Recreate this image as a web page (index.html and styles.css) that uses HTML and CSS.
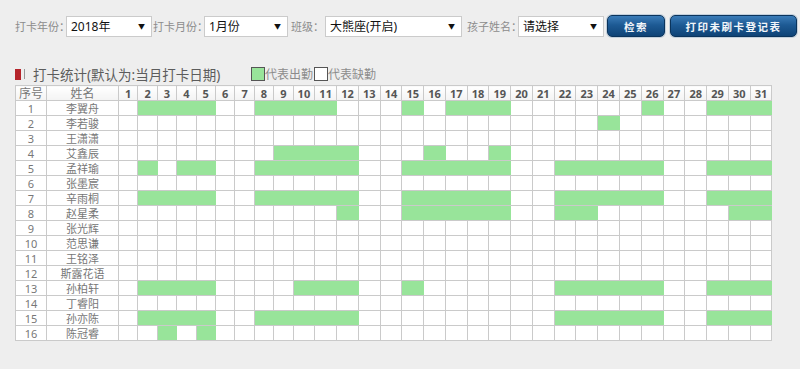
FILE: index.html
```html
<!DOCTYPE html>
<html lang="zh-CN">
<head>
    <meta charset="UTF-8">
    <title>打卡统计</title>
    <link rel="stylesheet" href="styles.css">
</head>
<body>
    <div class="toolbar">
        <span class="label l-year">打卡年份：</span>
        <div class="select s-year"><span>2018年</span><i>▼</i></div>
        <span class="label l-month">打卡月份：</span>
        <div class="select s-month"><span>1月份</span><i>▼</i></div>
        <span class="label l-class">班级：</span>
        <div class="select s-class"><span>大熊座(开启)</span><i>▼</i></div>
        <span class="label l-kid">孩子姓名：</span>
        <div class="select s-kid"><span>请选择</span><i>▼</i></div>
        <button class="btn btn-search">检索</button>
        <button class="btn btn-print">打印未刷卡登记表</button>
    </div>

    <div class="title-row">
        <span class="mark-red"></span><span class="mark-gray"></span>
        <h2>打卡统计(默认为:当月打卡日期)</h2>
        <div class="legend">
            <span class="box box-on"></span><span class="legend-text">代表出勤</span>
            <span class="box box-off"></span><span class="legend-text">代表缺勤</span>
        </div>
    </div>

    <table class="grid">
        <colgroup>
            <col class="c-no"><col class="c-name">
            <col class="c-d"><col class="c-d"><col class="c-d"><col class="c-d"><col class="c-d"><col class="c-d"><col class="c-d"><col class="c-d"><col class="c-d">
            <col class="c-dd"><col class="c-dd"><col class="c-dd"><col class="c-dd"><col class="c-dd"><col class="c-dd"><col class="c-dd"><col class="c-dd"><col class="c-dd"><col class="c-dd"><col class="c-dd">
            <col class="c-dd"><col class="c-dd"><col class="c-dd"><col class="c-dd"><col class="c-dd"><col class="c-dd"><col class="c-dd"><col class="c-dd"><col class="c-dd"><col class="c-dd"><col class="c-dd">
        </colgroup>
        <thead>
            <tr>
                <th class="th-text">序号</th><th class="th-text">姓名</th>
                <th>1</th><th>2</th><th>3</th><th>4</th><th>5</th><th>6</th><th>7</th><th>8</th><th>9</th><th>10</th><th>11</th><th>12</th><th>13</th><th>14</th><th>15</th><th>16</th><th>17</th><th>18</th><th>19</th><th>20</th><th>21</th><th>22</th><th>23</th><th>24</th><th>25</th><th>26</th><th>27</th><th>28</th><th>29</th><th>30</th><th>31</th>
            </tr>
        </thead>
        <tbody>
            <tr><td>1</td><td>李翼舟</td><td></td><td class="g"></td><td class="g"></td><td class="g"></td><td class="g"></td><td></td><td></td><td class="g"></td><td class="g"></td><td class="g"></td><td class="g"></td><td></td><td></td><td></td><td class="g"></td><td></td><td class="g"></td><td class="g"></td><td class="g"></td><td></td><td></td><td></td><td></td><td></td><td></td><td class="g"></td><td></td><td></td><td class="g"></td><td class="g"></td><td class="g"></td></tr>
            <tr><td>2</td><td>李若骏</td><td></td><td></td><td></td><td></td><td></td><td></td><td></td><td></td><td></td><td></td><td></td><td></td><td></td><td></td><td></td><td></td><td></td><td></td><td></td><td></td><td></td><td></td><td></td><td class="g"></td><td></td><td></td><td></td><td></td><td></td><td></td><td></td></tr>
            <tr><td>3</td><td>王潇潇</td><td></td><td></td><td></td><td></td><td></td><td></td><td></td><td></td><td></td><td></td><td></td><td></td><td></td><td></td><td></td><td></td><td></td><td></td><td></td><td></td><td></td><td></td><td></td><td></td><td></td><td></td><td></td><td></td><td></td><td></td><td></td></tr>
            <tr><td>4</td><td>艾鑫辰</td><td></td><td></td><td></td><td></td><td></td><td></td><td></td><td></td><td class="g"></td><td class="g"></td><td class="g"></td><td class="g"></td><td></td><td></td><td></td><td class="g"></td><td></td><td></td><td class="g"></td><td></td><td></td><td></td><td></td><td></td><td></td><td></td><td></td><td></td><td></td><td></td><td></td></tr>
            <tr><td>5</td><td>孟祥瑜</td><td></td><td class="g"></td><td></td><td class="g"></td><td class="g"></td><td></td><td></td><td class="g"></td><td class="g"></td><td class="g"></td><td class="g"></td><td class="g"></td><td></td><td></td><td class="g"></td><td class="g"></td><td class="g"></td><td class="g"></td><td class="g"></td><td></td><td></td><td class="g"></td><td class="g"></td><td class="g"></td><td class="g"></td><td class="g"></td><td></td><td></td><td class="g"></td><td class="g"></td><td class="g"></td></tr>
            <tr><td>6</td><td>张墨宸</td><td></td><td></td><td></td><td></td><td></td><td></td><td></td><td></td><td></td><td></td><td></td><td></td><td></td><td></td><td></td><td></td><td></td><td></td><td></td><td></td><td></td><td></td><td></td><td></td><td></td><td></td><td></td><td></td><td></td><td></td><td></td></tr>
            <tr><td>7</td><td>辛雨桐</td><td></td><td class="g"></td><td class="g"></td><td class="g"></td><td class="g"></td><td></td><td></td><td class="g"></td><td class="g"></td><td class="g"></td><td class="g"></td><td class="g"></td><td></td><td></td><td class="g"></td><td class="g"></td><td class="g"></td><td class="g"></td><td class="g"></td><td></td><td></td><td class="g"></td><td class="g"></td><td class="g"></td><td class="g"></td><td class="g"></td><td></td><td></td><td class="g"></td><td class="g"></td><td class="g"></td></tr>
            <tr><td>8</td><td>赵星柔</td><td></td><td></td><td></td><td></td><td></td><td></td><td></td><td></td><td></td><td></td><td></td><td class="g"></td><td></td><td></td><td class="g"></td><td class="g"></td><td class="g"></td><td class="g"></td><td class="g"></td><td></td><td></td><td class="g"></td><td class="g"></td><td></td><td></td><td></td><td></td><td></td><td></td><td class="g"></td><td class="g"></td></tr>
            <tr><td>9</td><td>张光辉</td><td></td><td></td><td></td><td></td><td></td><td></td><td></td><td></td><td></td><td></td><td></td><td></td><td></td><td></td><td></td><td></td><td></td><td></td><td></td><td></td><td></td><td></td><td></td><td></td><td></td><td></td><td></td><td></td><td></td><td></td><td></td></tr>
            <tr><td>10</td><td>范思谦</td><td></td><td></td><td></td><td></td><td></td><td></td><td></td><td></td><td></td><td></td><td></td><td></td><td></td><td></td><td></td><td></td><td></td><td></td><td></td><td></td><td></td><td></td><td></td><td></td><td></td><td></td><td></td><td></td><td></td><td></td><td></td></tr>
            <tr><td>11</td><td>王铭泽</td><td></td><td></td><td></td><td></td><td></td><td></td><td></td><td></td><td></td><td></td><td></td><td></td><td></td><td></td><td></td><td></td><td></td><td></td><td></td><td></td><td></td><td></td><td></td><td></td><td></td><td></td><td></td><td></td><td></td><td></td><td></td></tr>
            <tr><td>12</td><td>斯露花语</td><td></td><td></td><td></td><td></td><td></td><td></td><td></td><td></td><td></td><td></td><td></td><td></td><td></td><td></td><td></td><td></td><td></td><td></td><td></td><td></td><td></td><td></td><td></td><td></td><td></td><td></td><td></td><td></td><td></td><td></td><td></td></tr>
            <tr><td>13</td><td>孙柏轩</td><td></td><td class="g"></td><td class="g"></td><td class="g"></td><td class="g"></td><td></td><td></td><td></td><td></td><td class="g"></td><td class="g"></td><td class="g"></td><td></td><td></td><td class="g"></td><td></td><td></td><td></td><td></td><td></td><td></td><td class="g"></td><td class="g"></td><td class="g"></td><td class="g"></td><td class="g"></td><td></td><td></td><td class="g"></td><td class="g"></td><td class="g"></td></tr>
            <tr><td>14</td><td>丁睿阳</td><td></td><td></td><td></td><td></td><td></td><td></td><td></td><td></td><td></td><td></td><td></td><td></td><td></td><td></td><td></td><td></td><td></td><td></td><td></td><td></td><td></td><td></td><td></td><td></td><td></td><td></td><td></td><td></td><td></td><td></td><td></td></tr>
            <tr><td>15</td><td>孙亦陈</td><td></td><td class="g"></td><td class="g"></td><td class="g"></td><td class="g"></td><td></td><td></td><td class="g"></td><td class="g"></td><td class="g"></td><td class="g"></td><td class="g"></td><td></td><td></td><td></td><td></td><td></td><td></td><td></td><td></td><td></td><td class="g"></td><td class="g"></td><td class="g"></td><td class="g"></td><td class="g"></td><td></td><td></td><td class="g"></td><td class="g"></td><td class="g"></td></tr>
            <tr><td>16</td><td>陈冠睿</td><td></td><td></td><td class="g"></td><td></td><td class="g"></td><td></td><td></td><td></td><td></td><td></td><td></td><td></td><td></td><td></td><td></td><td></td><td></td><td></td><td></td><td></td><td></td><td></td><td></td><td></td><td></td><td></td><td></td><td></td><td></td><td></td><td></td></tr>
        </tbody>
    </table>
</body>
</html>
```

FILE: styles.css
```css
body { margin: 0; background-color: #eeeeee; color: #666; font-family: "Noto Sans", "Noto Sans CJK SC", sans-serif; }

.toolbar { display: flex; align-items: center; padding: 15px 0 0 15px; height: 22px; }
.label { font-size: 11px; color: #8c8c8c; white-space: nowrap; }
.l-year { width: 51px; }
.l-month { width: 51px; margin-left: 1px; }
.l-class { width: 34px; margin-left: 3px; }
.l-kid { width: 51px; margin-left: 5px; }
.select { box-sizing: border-box; height: 21px; display: flex; align-items: center; justify-content: space-between; padding: 0 6px 0 4px; background: white; border: 1px solid #cbcbcb; font-size: 12px; color: #111; }
.select i { font-style: normal; font-size: 7px; color: #111; }
.s-year { width: 86px; }
.s-month { width: 84px; }
.s-class { width: 137px; }
.s-kid { width: 86px; }
.btn { box-sizing: border-box; height: 22px; padding: 0; font-family: inherit; font-size: 10.5px; font-weight: bold; letter-spacing: 1.5px; color: #f2f6fa; background: linear-gradient(#3b7cb8, #1d5a94 45%, #0f4376); border: 1px solid #0b345c; border-radius: 5px; box-shadow: 0 0 0 1px #c3d0dc; cursor: pointer; }
.btn-search { width: 58px; margin-left: 3px; }
.btn-print { width: 127px; margin-left: 5px; }

.title-row { display: flex; align-items: center; height: 20px; margin: 27px 0 0 15px; }
.mark-red { width: 6px; height: 11px; background: #b5242b; }
.mark-gray { width: 1px; height: 10px; margin-left: 3px; background: #999; }
.title-row h2 { margin: 0 0 0 8px; font-size: 13.5px; font-weight: normal; color: #5c5c5c; width: 218px; white-space: nowrap; }
.legend { display: flex; align-items: center; font-size: 12px; color: #8c8c8c; }
.box { box-sizing: border-box; width: 14px; height: 14px; border: 1px solid #555; }
.box-on { background: #98e49a; }
.box-off { background: white; }
.legend-text { margin-right: 1px; }

.grid { margin: 1px 0 0 15px; width: 757px; table-layout: fixed; border-collapse: collapse; background: white; border: 1px solid #bdbdbd; }
.c-no { width: 31px; }
.c-name { width: 72px; }
.c-d { width: 19.4px; }
.c-dd { width: 21.77px; }
.grid th, .grid td { height: 14px; padding: 0; border: 1px solid #cacaca; text-align: center; font-size: 11px; line-height: 13px; white-space: nowrap; overflow: hidden; }
.grid th { background: linear-gradient(#ffffff, #f3f3f3); color: #555; font-weight: bold; }
.grid th.th-text { font-weight: normal; font-size: 12px; color: #777; }
.grid td { color: #777; }
.grid td.g { background: #98e49a; border-left-color: #98e49a; border-right-color: #98e49a; }
```
